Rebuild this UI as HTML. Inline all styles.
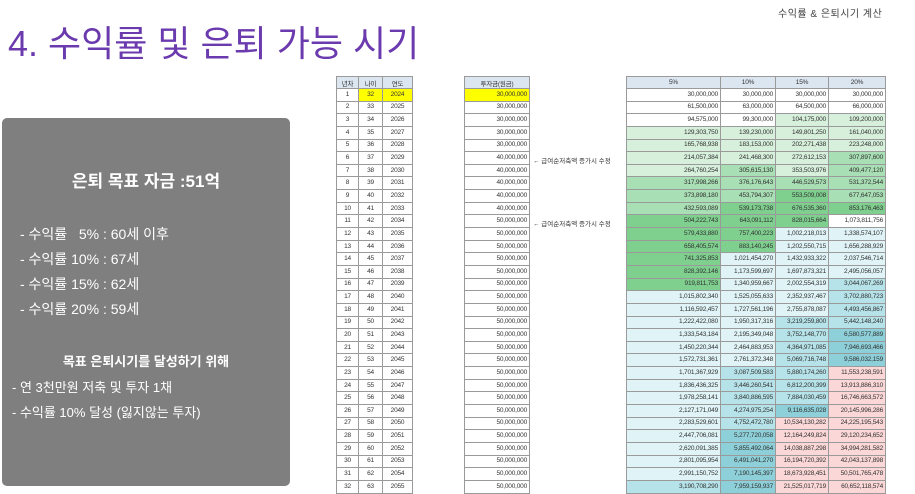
<!DOCTYPE html>
<html><head><meta charset="utf-8">
<style>
*{margin:0;padding:0;box-sizing:border-box}
body{width:915px;height:493px;overflow:hidden;background:#fff;position:relative;font-family:"Liberation Sans","Noto Sans CJK KR",sans-serif}
.top{position:absolute;left:778px;top:5px;font-size:10px;color:#444;letter-spacing:0.5px}
h1{position:absolute;left:8px;top:15px;font-size:36px;font-weight:normal;color:#6a3aae;letter-spacing:0px;font-family:"Liberation Sans","Noto Sans CJK KR",sans-serif}
.box{position:absolute;left:2px;top:118px;width:288px;height:368px;background:#7f7f7f;border-radius:5px;color:#fff}
.box div{position:absolute;white-space:nowrap}
table{position:absolute;border-collapse:collapse;table-layout:fixed;font-size:6.5px;color:#333;letter-spacing:-0.2px}
td{height:12.65px;border:1px solid #9a9a9a;padding:0 2px;line-height:10px;overflow:hidden;white-space:nowrap}
th{height:12px;background:#dce6f1;font-weight:normal;border:1px solid #9a9a9a;font-size:6.5px;color:#333}
.l td{text-align:center}
.n td{text-align:right}
.y{background:#ffff00}
.w{background:#fff}.g1{background:#d7f0dc}.g2{background:#a9dfb4}.g3{background:#7fd08f}
.c1{background:#e0f4f7}.c2{background:#b6e3e9}.c3{background:#8ed0d9}.p{background:#fbd7d7}
.note{position:absolute;left:533px;font-size:6.5px;color:#333}
</style></head><body>
<div class="top">수익률 &amp; 은퇴시기 계산</div>
<h1>4. 수익률 및 은퇴 가능 시기</h1>
<div class="box">
<div style="left:0;width:288px;text-align:center;top:49px;font-size:17px;font-weight:bold">은퇴 목표 자금 :51억</div>
<div style="left:18px;top:106px;font-size:14px">- 수익률 &nbsp;&nbsp;5% : 60세 이후</div>
<div style="left:18px;top:131px;font-size:14px">- 수익률 10% : 67세</div>
<div style="left:18px;top:156px;font-size:14px">- 수익률 15% : 62세</div>
<div style="left:18px;top:181px;font-size:14px">- 수익률 20% : 59세</div>
<div style="left:0;width:288px;text-align:center;top:233px;font-size:13px;font-weight:bold">목표 은퇴시기를 달성하기 위해</div>
<div style="left:10px;top:259px;font-size:13px">- 연 3천만원 저축 및 투자 1채</div>
<div style="left:10px;top:284px;font-size:13px">- 수익률 10% 달성 (잃지않는 투자)</div>
</div>

<table class="l" style="left:336px;top:76px;width:76px">
<colgroup><col style="width:22px"><col style="width:24px"><col style="width:30px"></colgroup>
<tr><th>년차</th><th>나이</th><th>연도</th></tr>
<tr><td>1</td><td class="y">32</td><td class="y">2024</td></tr>
<tr><td>2</td><td>33</td><td>2025</td></tr>
<tr><td>3</td><td>34</td><td>2026</td></tr>
<tr><td>4</td><td>35</td><td>2027</td></tr>
<tr><td>5</td><td>36</td><td>2028</td></tr>
<tr><td>6</td><td>37</td><td>2029</td></tr>
<tr><td>7</td><td>38</td><td>2030</td></tr>
<tr><td>8</td><td>39</td><td>2031</td></tr>
<tr><td>9</td><td>40</td><td>2032</td></tr>
<tr><td>10</td><td>41</td><td>2033</td></tr>
<tr><td>11</td><td>42</td><td>2034</td></tr>
<tr><td>12</td><td>43</td><td>2035</td></tr>
<tr><td>13</td><td>44</td><td>2036</td></tr>
<tr><td>14</td><td>45</td><td>2037</td></tr>
<tr><td>15</td><td>46</td><td>2038</td></tr>
<tr><td>16</td><td>47</td><td>2039</td></tr>
<tr><td>17</td><td>48</td><td>2040</td></tr>
<tr><td>18</td><td>49</td><td>2041</td></tr>
<tr><td>19</td><td>50</td><td>2042</td></tr>
<tr><td>20</td><td>51</td><td>2043</td></tr>
<tr><td>21</td><td>52</td><td>2044</td></tr>
<tr><td>22</td><td>53</td><td>2045</td></tr>
<tr><td>23</td><td>54</td><td>2046</td></tr>
<tr><td>24</td><td>55</td><td>2047</td></tr>
<tr><td>25</td><td>56</td><td>2048</td></tr>
<tr><td>26</td><td>57</td><td>2049</td></tr>
<tr><td>27</td><td>58</td><td>2050</td></tr>
<tr><td>28</td><td>59</td><td>2051</td></tr>
<tr><td>29</td><td>60</td><td>2052</td></tr>
<tr><td>30</td><td>61</td><td>2053</td></tr>
<tr><td>31</td><td>62</td><td>2054</td></tr>
<tr><td>32</td><td>63</td><td>2055</td></tr>
</table>

<table class="n" style="left:464px;top:76px;width:66px">
<tr><th>투자금(원금)</th></tr>
<tr><td class="y">30,000,000</td></tr>
<tr><td>30,000,000</td></tr><tr><td>30,000,000</td></tr><tr><td>30,000,000</td></tr><tr><td>30,000,000</td></tr>
<tr><td>40,000,000</td></tr><tr><td>40,000,000</td></tr><tr><td>40,000,000</td></tr><tr><td>40,000,000</td></tr><tr><td>40,000,000</td></tr>
<tr><td>50,000,000</td></tr><tr><td>50,000,000</td></tr><tr><td>50,000,000</td></tr><tr><td>50,000,000</td></tr><tr><td>50,000,000</td></tr>
<tr><td>50,000,000</td></tr><tr><td>50,000,000</td></tr><tr><td>50,000,000</td></tr><tr><td>50,000,000</td></tr><tr><td>50,000,000</td></tr>
<tr><td>50,000,000</td></tr><tr><td>50,000,000</td></tr><tr><td>50,000,000</td></tr><tr><td>50,000,000</td></tr><tr><td>50,000,000</td></tr>
<tr><td>50,000,000</td></tr><tr><td>50,000,000</td></tr><tr><td>50,000,000</td></tr><tr><td>50,000,000</td></tr><tr><td>50,000,000</td></tr>
<tr><td>50,000,000</td></tr><tr><td>50,000,000</td></tr>
</table>
<div class="note" style="top:155px">← 급여순저축액 증가시 수정</div>
<div class="note" style="top:218px">← 급여순저축액 증가시 수정</div>

<table class="n" style="left:626px;top:76px;width:259px">
<colgroup><col style="width:94px"><col style="width:55px"><col style="width:53px"><col style="width:57px"></colgroup>
<tr><th>5%</th><th>10%</th><th>15%</th><th>20%</th></tr>
<tr><td class="w">30,000,000</td><td class="w">30,000,000</td><td class="w">30,000,000</td><td class="w">30,000,000</td></tr>
<tr><td class="w">61,500,000</td><td class="w">63,000,000</td><td class="w">64,500,000</td><td class="w">66,000,000</td></tr>
<tr><td class="w">94,575,000</td><td class="w">99,300,000</td><td class="g1">104,175,000</td><td class="g1">109,200,000</td></tr>
<tr><td class="g1">129,303,750</td><td class="g1">139,230,000</td><td class="g1">149,801,250</td><td class="g1">161,040,000</td></tr>
<tr><td class="g1">165,768,938</td><td class="g1">183,153,000</td><td class="g1">202,271,438</td><td class="g1">223,248,000</td></tr>
<tr><td class="g1">214,057,384</td><td class="g1">241,468,300</td><td class="g1">272,612,153</td><td class="g2">307,897,600</td></tr>
<tr><td class="g1">264,760,254</td><td class="g2">305,615,130</td><td class="g1">353,503,976</td><td class="g2">409,477,120</td></tr>
<tr><td class="g2">317,998,266</td><td class="g2">376,176,643</td><td class="g2">446,529,573</td><td class="g2">531,372,544</td></tr>
<tr><td class="g2">373,898,180</td><td class="g2">453,794,307</td><td class="g3">553,509,008</td><td class="g2">677,647,053</td></tr>
<tr><td class="g2">432,593,089</td><td class="g3">539,173,738</td><td class="g3">676,535,360</td><td class="g3">853,176,463</td></tr>
<tr><td class="g3">504,222,743</td><td class="g3">643,091,112</td><td class="g3">828,015,664</td><td class="w">1,073,811,756</td></tr>
<tr><td class="g3">579,433,880</td><td class="g3">757,400,223</td><td class="c1">1,002,218,013</td><td class="c1">1,338,574,107</td></tr>
<tr><td class="g3">658,405,574</td><td class="g3">883,140,245</td><td class="c1">1,202,550,715</td><td class="c1">1,656,288,929</td></tr>
<tr><td class="g3">741,325,853</td><td class="c1">1,021,454,270</td><td class="c1">1,432,933,322</td><td class="c1">2,037,546,714</td></tr>
<tr><td class="g3">828,392,146</td><td class="c1">1,173,599,697</td><td class="c1">1,697,873,321</td><td class="c1">2,495,056,057</td></tr>
<tr><td class="g3">919,811,753</td><td class="c1">1,340,959,667</td><td class="c1">2,002,554,319</td><td class="c2">3,044,067,269</td></tr>
<tr><td class="c1">1,015,802,340</td><td class="c1">1,525,055,633</td><td class="c1">2,352,937,467</td><td class="c2">3,702,880,723</td></tr>
<tr><td class="c1">1,116,592,457</td><td class="c1">1,727,561,196</td><td class="c1">2,755,878,087</td><td class="c2">4,493,456,867</td></tr>
<tr><td class="c1">1,222,422,080</td><td class="c1">1,950,317,316</td><td class="c2">3,219,259,800</td><td class="c2">5,442,148,240</td></tr>
<tr><td class="c1">1,333,543,184</td><td class="c1">2,195,349,048</td><td class="c2">3,752,148,770</td><td class="c3">6,580,577,889</td></tr>
<tr><td class="c1">1,450,220,344</td><td class="c1">2,464,883,953</td><td class="c2">4,364,971,085</td><td class="c3">7,946,693,466</td></tr>
<tr><td class="c1">1,572,731,361</td><td class="c1">2,761,372,348</td><td class="c2">5,069,716,748</td><td class="c3">9,586,032,159</td></tr>
<tr><td class="c1">1,701,367,929</td><td class="c2">3,087,509,583</td><td class="c2">5,880,174,260</td><td class="p">11,553,238,591</td></tr>
<tr><td class="c1">1,836,436,325</td><td class="c2">3,446,260,541</td><td class="c2">6,812,200,399</td><td class="p">13,913,886,310</td></tr>
<tr><td class="c1">1,978,258,141</td><td class="c2">3,840,886,595</td><td class="c2">7,884,030,459</td><td class="p">16,746,663,572</td></tr>
<tr><td class="c1">2,127,171,049</td><td class="c2">4,274,975,254</td><td class="c3">9,116,635,028</td><td class="p">20,145,996,286</td></tr>
<tr><td class="c1">2,283,529,601</td><td class="c2">4,752,472,780</td><td class="p">10,534,130,282</td><td class="p">24,225,195,543</td></tr>
<tr><td class="c1">2,447,706,081</td><td class="c3">5,277,720,058</td><td class="p">12,164,249,824</td><td class="p">29,120,234,652</td></tr>
<tr><td class="c1">2,620,091,385</td><td class="c3">5,855,492,064</td><td class="p">14,038,887,298</td><td class="p">34,994,281,582</td></tr>
<tr><td class="c1">2,801,095,954</td><td class="c3">6,491,041,270</td><td class="p">16,194,720,392</td><td class="p">42,043,137,898</td></tr>
<tr><td class="c1">2,991,150,752</td><td class="c3">7,190,145,397</td><td class="p">18,673,928,451</td><td class="p">50,501,765,478</td></tr>
<tr><td class="c2">3,190,708,290</td><td class="c3">7,959,159,937</td><td class="p">21,525,017,719</td><td class="p">60,652,118,574</td></tr>
</table>
</body></html>
